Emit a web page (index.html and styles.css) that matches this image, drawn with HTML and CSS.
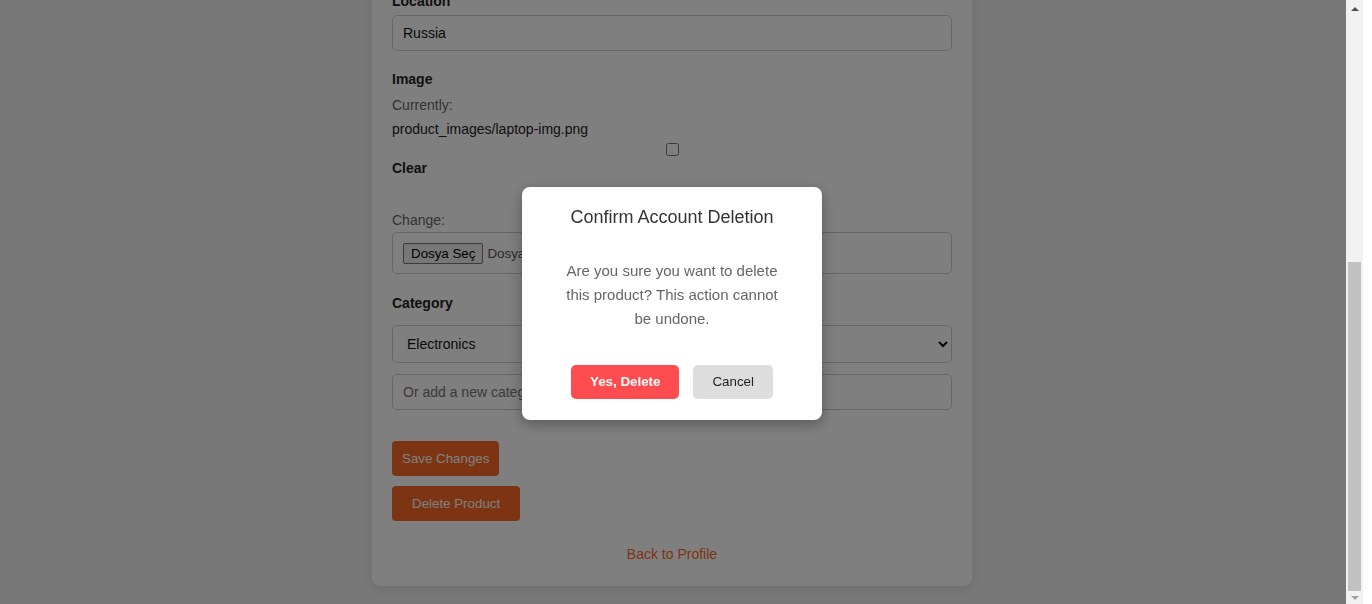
FILE: index.html
```html
<!DOCTYPE html>
<html lang="en">
<head>
<meta charset="utf-8">
<title>Edit Product</title>
<link rel="stylesheet" href="styles.css">
</head>
<body>
<div class="page">
  <div class="card">
    <h2 class="card-title">Edit Product</h2>
    <form class="product-form" onsubmit="return false">
      <div class="form-group">
        <label class="field-label">Name</label>
        <input class="field-input" type="text" value="Laptop">
      </div>
      <div class="form-group">
        <label class="field-label">Description</label>
        <textarea class="field-input field-textarea">Lightweight laptop with 16GB RAM and 512GB SSD.</textarea>
      </div>
      <div class="form-group">
        <label class="field-label">Price</label>
        <input class="field-input" type="text" value="850.00">
      </div>
      <div class="form-group form-group-location">
        <label class="field-label">Location</label>
        <input class="field-input" type="text" value="Russia">
      </div>
      <div class="form-group">
        <label class="field-label">Image</label>
        <div class="image-current">Currently:</div>
        <div class="image-path">product_images/laptop-img.png</div>
        <input class="clear-check" type="checkbox" id="image-clear">
        <label class="field-label clear-label" for="image-clear">Clear</label>
        <div class="image-change">Change:</div>
        <label class="file-box">
          <span class="file-btn">Dosya Seç</span>
          <span class="file-status">Dosya seçilmedi</span>
        </label>
      </div>
      <div class="form-group">
        <label class="field-label">Category</label>
        <select class="field-input field-select">
          <option>Electronics</option>
          <option>Books</option>
          <option>Clothing</option>
        </select>
        <input class="field-input new-category" type="text" placeholder="Or add a new category">
      </div>
      <button class="btn btn-save" type="submit">Save Changes</button>
    </form>
    <form class="delete-form" onsubmit="return false">
      <button class="btn btn-delete" type="submit">Delete Product</button>
    </form>
    <div class="back-row"><a class="back-link" href="#">Back to Profile</a></div>
  </div>
</div>

<div class="overlay">
  <div class="modal">
    <h3 class="modal-title">Confirm Account Deletion</h3>
    <p class="modal-text">Are you sure you want to delete this product? This action cannot be undone.</p>
    <div class="modal-actions">
      <button class="modal-btn modal-btn-confirm" type="button">Yes, Delete</button>
      <button class="modal-btn modal-btn-cancel" type="button">Cancel</button>
    </div>
  </div>
</div>

<div class="scroll-gutter" aria-hidden="true">
  <div class="scroll-track">
    <span class="scroll-arrow scroll-arrow-up"></span>
    <span class="scroll-thumb"></span>
    <span class="scroll-arrow scroll-arrow-down"></span>
  </div>
</div>
<script src="script.js"></script>
</body>
</html>
```

FILE: styles.css
```css
* {
  box-sizing: border-box;
}

html, body {
  margin: 0;
  padding: 0;
}

body {
  background: #f0f0f0;
  font-family: "Liberation Sans", Arial, sans-serif;
  font-size: 14px;
  color: #333;
}

.page {
  padding: 20px 28px 18px 0;
}

.card {
  width: 600px;
  margin: 0 auto;
  background: #fff;
  border-radius: 8px;
  box-shadow: 0 2px 10px rgba(0, 0, 0, 0.1);
  padding: 20px 20px 24px;
}

.card-title {
  margin: 0 0 24px;
  font-size: 22px;
  line-height: 28px;
  text-align: center;
  color: #333;
}

.form-group {
  margin-bottom: 21px;
}

.form-group-location {
  margin-bottom: 20px;
}

.field-label {
  display: block;
  font-weight: bold;
  font-size: 14px;
  line-height: 16px;
  color: #222;
  margin-bottom: 6px;
}

.field-input {
  display: block;
  width: 100%;
  height: 36px;
  padding: 0 10px;
  border: 1px solid #ccc;
  border-radius: 5px;
  background: #fff;
  font-family: inherit;
  font-size: 14px;
  color: #111;
}

.field-input::placeholder {
  color: #757575;
}

.field-textarea {
  height: 90px;
  padding: 10px;
  resize: vertical;
}

.image-current {
  margin-top: 10px;
  line-height: 16px;
  color: #666;
}

.image-path {
  margin-top: 8px;
  line-height: 16px;
  color: #222;
}

.clear-check {
  display: block;
  width: 13px;
  height: 13px;
  margin: 6px auto 0;
}

.clear-label {
  margin: 4px 0 0;
}

.image-change {
  margin-top: 36px;
  line-height: 16px;
  color: #666;
}

.file-box {
  display: flex;
  align-items: center;
  margin-top: 4px;
  height: 42px;
  padding: 0 10px;
  border: 1px solid #ccc;
  border-radius: 5px;
  background: #fff;
}

.file-btn {
  display: inline-flex;
  align-items: center;
  height: 21px;
  padding: 0 7px;
  border: 1px solid #767676;
  border-radius: 2px;
  background: #efefef;
  font-size: 13.333px;
  color: #000;
}

.file-status {
  margin-left: 4px;
  font-size: 13.333px;
  color: #555;
}

.field-select {
  margin-top: 14px;
  height: 38px;
  padding: 0 10px;
}

.new-category {
  margin-top: 11px;
}

.btn {
  display: block;
  height: 35px;
  border: none;
  border-radius: 4px;
  background: rgb(248, 105, 38);
  color: #fff;
  font-family: inherit;
  font-size: 13.333px;
  cursor: pointer;
}

.btn-save {
  margin-top: 31px;
  padding: 0 10px;
}

.delete-form {
  margin-top: 10px;
}

.btn-delete {
  padding: 0 20px;
}

.back-row {
  margin-top: 25px;
  text-align: center;
  line-height: 16px;
}

.back-link {
  color: rgb(248, 105, 38);
  text-decoration: none;
}

.overlay {
  position: fixed;
  top: 0;
  left: 0;
  bottom: 0;
  right: 26px;
  background: rgba(0, 0, 0, 0.5);
  display: flex;
  align-items: center;
  justify-content: center;
  padding: 2px 2px 0 0;
}

.modal {
  width: 300px;
  background: #fff;
  border-radius: 8px;
  box-shadow: 0 4px 14px rgba(0, 0, 0, 0.3);
  padding: 20px 40px 21px;
  text-align: center;
}

.modal-title {
  margin: 0 -20px;
  font-size: 18px;
  font-weight: normal;
  line-height: 20px;
  color: #333;
}

.modal-text {
  margin: 32px 0 0;
  font-size: 15px;
  line-height: 24px;
  color: #666;
}

.modal-actions {
  display: flex;
  justify-content: center;
  gap: 14px;
  margin: 34px -20px 0;
}

.modal-btn {
  height: 34px;
  padding: 0 19px;
  border: none;
  border-radius: 5px;
  font-family: inherit;
  font-size: 13.333px;
  cursor: pointer;
}

.modal-btn-confirm {
  background: #ff4d4f;
  color: #fff;
  font-weight: bold;
}

.modal-btn-cancel {
  background: #ddd;
  color: #222;
}

/* classic browser scrollbar, scrolled to the end */
.scroll-gutter {
  position: fixed;
  top: 0;
  right: 0;
  bottom: 0;
  width: 26px;
  background: #fff;
}

.scroll-track {
  width: 17px;
  height: 100%;
  background: #f1f1f1;
  display: flex;
  flex-direction: column;
  align-items: center;
}

.scroll-arrow {
  display: block;
  width: 0;
  height: 0;
  border-left: 4px solid transparent;
  border-right: 4px solid transparent;
}

.scroll-arrow-up {
  margin-top: 7px;
  border-bottom: 4px solid #505050;
}

.scroll-thumb {
  display: block;
  width: 13px;
  height: 329px;
  margin-top: 251px;
  background: #c1c1c1;
}

.scroll-arrow-down {
  margin-top: 5px;
  border-top: 4px solid #a3a3a3;
}
```

FILE: script.js
```js
function scrollToEnd() {
  window.scrollTo(0, document.documentElement.scrollHeight);
}
scrollToEnd();
window.addEventListener('load', scrollToEnd);
```
